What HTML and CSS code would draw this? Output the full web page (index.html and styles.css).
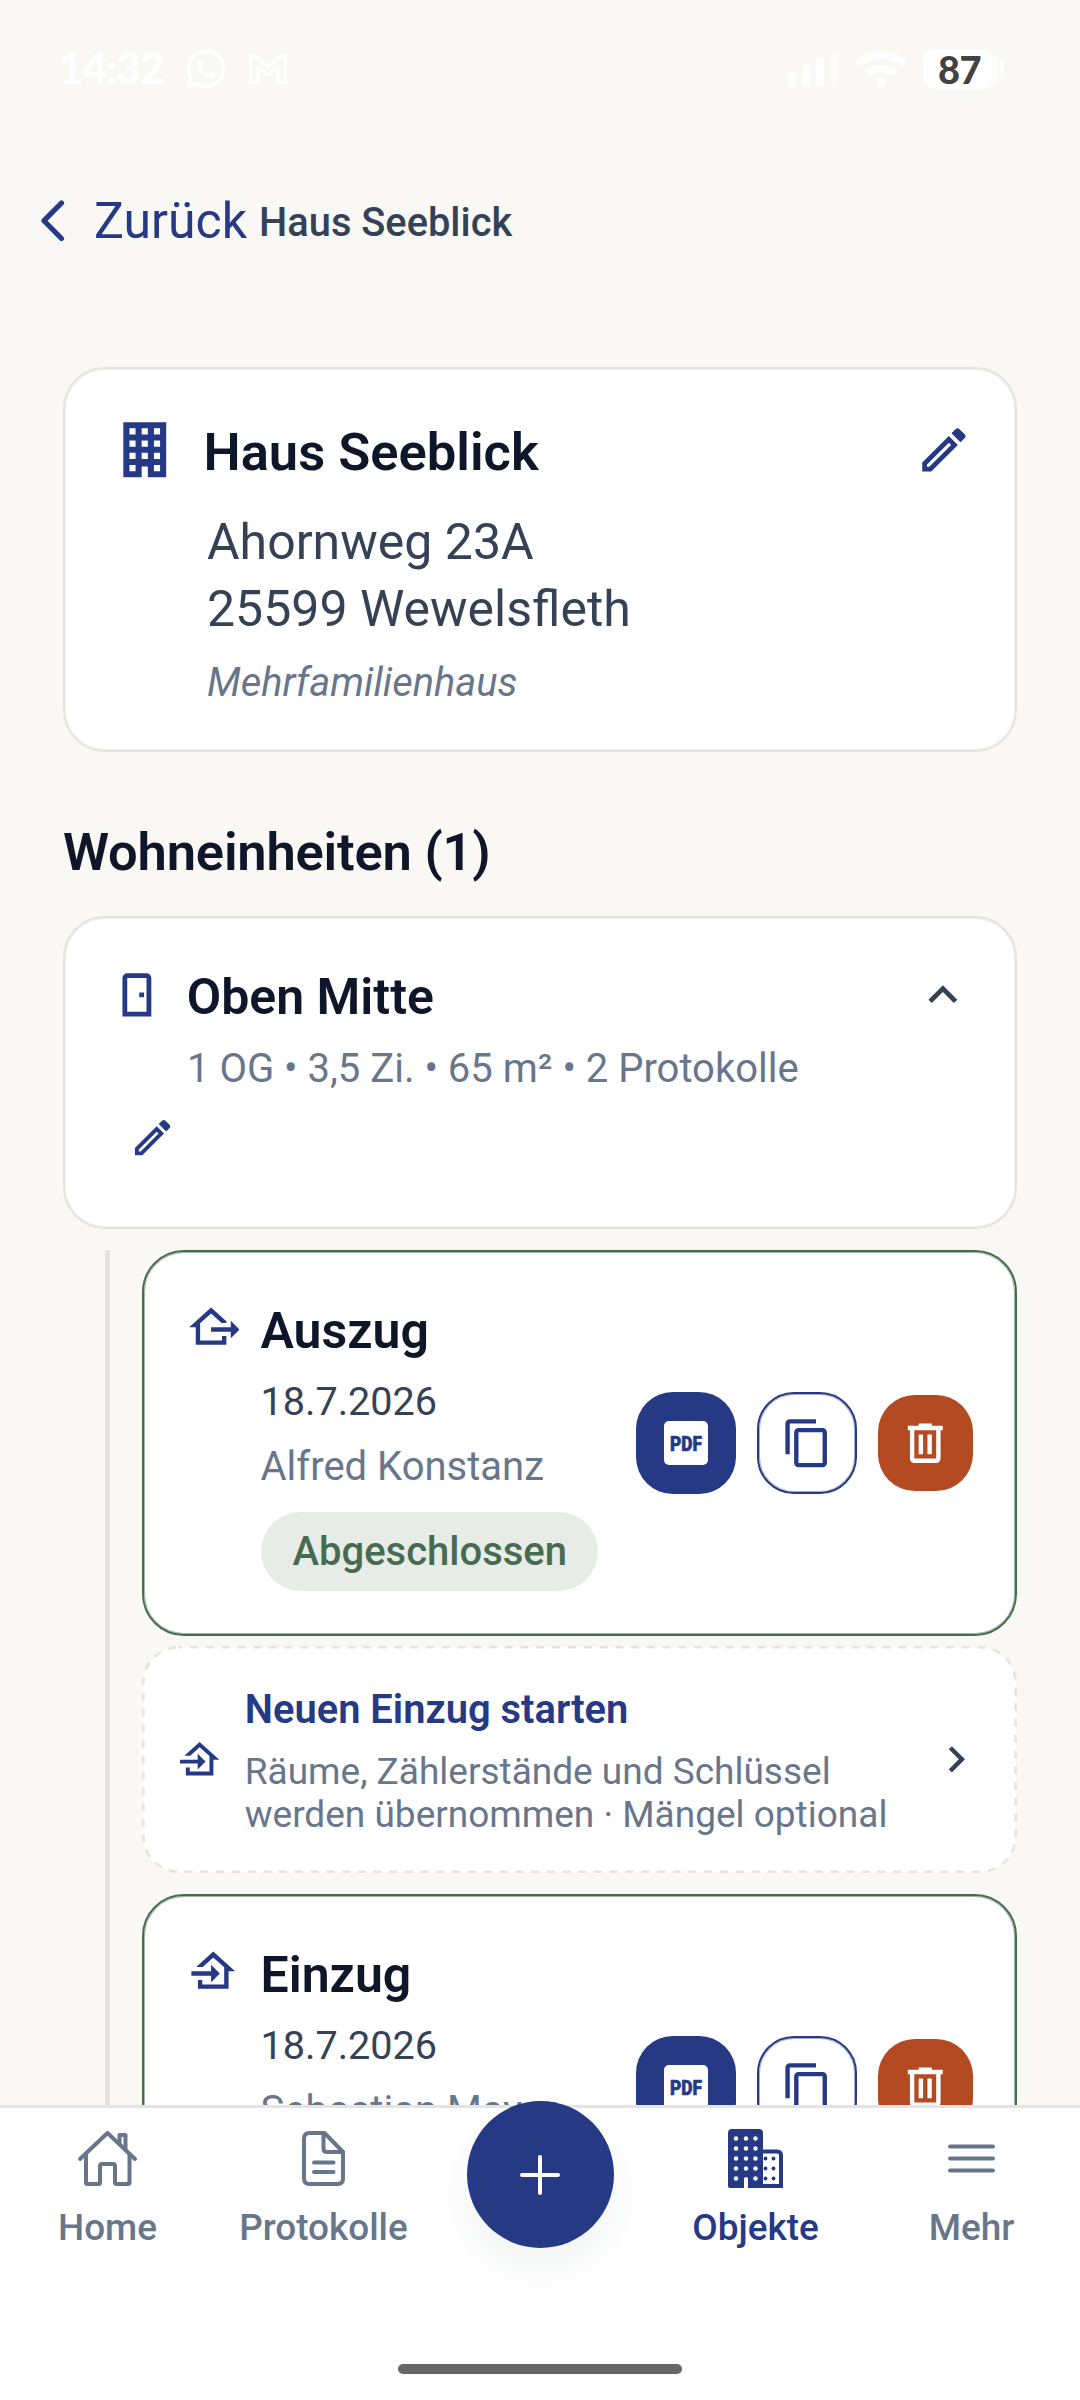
FILE: index.html
```html
<!DOCTYPE html>
<html lang="de">
<head>
<meta charset="utf-8">
<title>Haus Seeblick</title>
<link rel="stylesheet" href="styles.css">
</head>
<body>
<svg class="sprite" aria-hidden="true">
  <symbol id="i-building" viewBox="0 0 24 24"><path d="M5 3V21H11V17.5H13V21H19V3H5M7 5H9V7H7V5M11 5H13V7H11V5M15 5H17V7H15V5M7 9H9V11H7V9M11 9H13V11H11V9M15 9H17V11H15V9M7 13H9V15H7V13M11 13H13V15H11V13M15 13H17V15H15V13M7 17H9V19H7V17M15 17H17V19H15V17Z"/></symbol>
  <symbol id="i-pencil" viewBox="0 0 24 24"><path d="M14.06 9L15 9.94L5.92 19H5V18.08L14.06 9M17.66 3C17.41 3 17.15 3.1 16.96 3.29L15.13 5.12L18.88 8.87L20.71 7.04C21.1 6.65 21.1 6 20.71 5.63L18.37 3.29C18.17 3.09 17.92 3 17.66 3M14.06 6.19L3 17.25V21H6.75L17.81 9.94L14.06 6.19Z"/></symbol>
  <symbol id="i-door" viewBox="0 0 24 24"><path fill-rule="evenodd" d="M8 3H16A2 2 0 0 1 18 5V21H6V5A2 2 0 0 1 8 3M8 5V19H16V5H8M13 11H15V13H13V11Z"/></symbol>
  <symbol id="i-up" viewBox="0 0 24 24"><path d="M7.41 15.41L12 10.83L16.59 15.41L18 14L12 8L6 14Z"/></symbol>
  <symbol id="i-right" viewBox="0 0 24 24"><path d="M8.59 16.58L13.17 12L8.59 7.41L10 6L16 12L10 18Z"/></symbol>
  <symbol id="i-out" viewBox="0 0 24 24"><path d="M24 13L20 17V14H11V12H20V9L24 13M4 20V12H1L11 3L18 9.3V10H15.79L11 5.69L6 10.19V18H16V16H18V20H4Z"/></symbol>
  <symbol id="i-in" viewBox="0 0 24 24"><path d="M15 13L11 17V14H2V12H11V9L15 13M5 20V16H7V18H17V10.19L12 5.69L7.21 10H4.22L12 3L22 12H19V20H5Z"/></symbol>
  <symbol id="i-copy" viewBox="0 0 24 24"><path d="M19 21H8V7H19M19 5H8A2 2 0 0 0 6 7V21A2 2 0 0 0 8 23H19A2 2 0 0 0 21 21V7A2 2 0 0 0 19 5M16 1H4A2 2 0 0 0 2 3V17H4V3H16V1Z"/></symbol>
  <symbol id="i-trash" viewBox="0 0 24 24"><path d="M9 3V4H4V6H5V19A2 2 0 0 0 7 21H17A2 2 0 0 0 19 19V6H20V4H15V3H9M7 6H17V19H7V6M9 8V17H11V8H9M13 8V17H15V8H13Z"/></symbol>
</svg>

<div class="screen">
  <div class="status">
    <span class="clock">14:32</span>
    <svg class="whatsapp" width="40" height="40" viewBox="0 0 40 40"><path d="M2.500 37L5 28.500A17.500 17.500 0 1 1 11.500 35Z" fill="none" stroke="#fff" stroke-width="3.400" stroke-linejoin="round"/><path d="M14 11C11 11 10 14 11 17C13 23 17 27 23 29C27 30 30 28 30 25L25.500 22.500L22.500 25C19 23.500 17 21.500 15.500 18L17.500 15.500L15.500 11Z" fill="#fff"/></svg>
    <svg class="gmail" width="40" height="32" viewBox="0 0 40 32"><path d="M2.500 27V5Q2.500 1 6.500 3L20 14L33.500 3Q37.500 1 37.500 5V29.500H30V14L20 22L10 14V29.500H2.500Z" fill="none" stroke="#fff" stroke-width="3.400" stroke-linejoin="round"/></svg>
    <svg class="signal" width="50" height="36" viewBox="0 0 50 36"><g fill="#fff"><rect y="20.500" width="8" height="15.500" rx="4"/><rect x="14" y="13.500" width="8" height="22.500" rx="4"/><rect x="28" y="6" width="8" height="30" rx="4"/><rect x="42" width="8" height="36" rx="4" opacity=".5"/></g></svg>
    <svg class="wifi" width="50" height="36" viewBox="0 0 50 36"><g fill="none" stroke="#fff" stroke-width="7.500" stroke-linecap="round"><path d="M4 11Q25-3.500 46 11"/><path d="M13.500 20.500Q25 14.500 36.500 20.500"/></g><circle cx="25" cy="31.500" r="4.500" fill="#fff"/></svg>
    <span class="battery"><span class="battery-level">87</span></span><span class="battery-tip"></span>
  </div>

  <header class="header">
    <svg class="back" width="26" height="42" viewBox="0 0 26 42"><path d="M21.500 3L4 20.700L21.500 38.500" fill="none" stroke="currentColor" stroke-width="5.200" stroke-linecap="round" stroke-linejoin="round"/></svg>
    <span class="back-label">Zurück</span>
    <span class="header-title">Haus Seeblick</span>
  </header>

  <main class="content">
    <section class="card house">
      <div class="house-head">
        <svg class="i28 blue"><use href="#i-building"/></svg>
        <h1 class="house-name">Haus Seeblick</h1>
        <svg class="i22 blue"><use href="#i-pencil"/></svg>
      </div>
      <p class="address">Ahornweg 23A<br>25599 Wewelsfleth</p>
      <p class="kind">Mehrfamilienhaus</p>
    </section>

    <h2 class="section-title">Wohneinheiten (1)</h2>

    <section class="card unit">
      <div class="unit-head">
        <svg class="i22 blue"><use href="#i-door"/></svg>
        <h3 class="unit-name">Oben Mitte</h3>
        <svg class="i22 slate"><use href="#i-up"/></svg>
      </div>
      <p class="unit-meta">1 OG • 3,5 Zi. • 65 m² • 2 Protokolle</p>
      <svg class="i18 blue unit-edit"><use href="#i-pencil"/></svg>
    </section>

    <div class="timeline">
      <article class="card record">
        <svg class="i20 blue record-icon"><use href="#i-out"/></svg>
        <div class="record-body">
          <h3 class="record-title">Auszug</h3>
          <p class="record-date">18.7.2026</p>
          <p class="record-name">Alfred Konstanz</p>
          <span class="badge">Abgeschlossen</span>
        </div>
        <div class="actions">
          <span class="btn btn-pdf"><svg width="44" height="44" viewBox="0 0 44 44"><rect width="44" height="44" rx="5" fill="#fff"/><text class="pdf-text" x="6" y="29.500" textLength="32" lengthAdjust="spacingAndGlyphs">PDF</text></svg></span>
          <span class="btn btn-copy"><svg class="i20"><use href="#i-copy"/></svg></span>
          <span class="btn btn-delete"><svg class="i20"><use href="#i-trash"/></svg></span>
        </div>
      </article>

      <article class="start">
        <svg class="dashes" width="875" height="227" viewBox="0 0 875 227"><rect x="1.300" y="1.300" width="872.400" height="224.400" rx="35.400" fill="#fff" stroke="#e4e3dd" stroke-width="2.625" stroke-dasharray="7.875 7.875" stroke-dashoffset="4.450"/></svg>
        <svg class="i18 blue start-part"><use href="#i-in"/></svg>
        <div class="start-body start-part">
          <h4 class="start-title">Neuen Einzug starten</h4>
          <p class="start-text">Räume, Zählerstände und Schlüssel<br>werden übernommen · Mängel optional</p>
        </div>
        <svg class="i20 slate start-part"><use href="#i-right"/></svg>
      </article>

      <article class="card record">
        <svg class="i20 blue record-icon"><use href="#i-in"/></svg>
        <div class="record-body">
          <h3 class="record-title">Einzug</h3>
          <p class="record-date">18.7.2026</p>
          <p class="record-name">Sebastian Mayer</p>
        </div>
        <div class="actions">
          <span class="btn btn-pdf"><svg width="44" height="44" viewBox="0 0 44 44"><rect width="44" height="44" rx="5" fill="#fff"/><text class="pdf-text" x="6" y="29.500" textLength="32" lengthAdjust="spacingAndGlyphs">PDF</text></svg></span>
          <span class="btn btn-copy"><svg class="i20"><use href="#i-copy"/></svg></span>
          <span class="btn btn-delete"><svg class="i20"><use href="#i-trash"/></svg></span>
        </div>
      </article>
    </div>
  </main>

  <nav class="nav">
    <a class="tab">
      <svg class="tab-icon" viewBox="0 0 64 64"><g class="line"><path d="M4 32L31.500 6L59 32"/><path d="M10 27V55.500Q10 57 11.500 57H22.500Q24 57 24 55.500V39Q24 37 26 37H37Q39 37 39 39V55.500Q39 57 40.500 57H52Q53.500 57 53.500 55.500V27"/><path d="M43.500 17V8H49.500V23"/></g></svg>
      <span>Home</span>
    </a>
    <a class="tab">
      <svg class="tab-icon" viewBox="0 0 64 64"><g class="line"><path d="M32 6H17.500Q12 6 12 11.500V51.500Q12 57 17.500 57H45.500Q51 57 51 51.500V25L32.500 6"/><path d="M31.500 6V21.500Q31.500 25 35 25H51"/><path d="M22 35.500H41.500M22 45H41.500"/></g></svg>
      <span>Protokolle</span>
    </a>
    <div class="tab">
      <span class="fab"><svg width="40" height="40" viewBox="0 0 40 40"><path d="M20 2V38M2 20H38" stroke="#fff" stroke-width="4" stroke-linecap="round"/></svg></span>
    </div>
    <a class="tab active">
      <svg class="tab-icon" viewBox="0 0 64 64"><path fill="currentColor" d="M8 2H35Q39 2 39 6V61H24V52Q24 50 22 50Q20 50 20 52V61H6Q4 61 4 59V6Q4 2 8 2Z"/><path d="M38 24.500H53Q57 24.500 57 28.500V59H38" fill="none" stroke="currentColor" stroke-width="4"/><g fill="#fff"><circle cx="12" cy="11.500" r="2.200"/><circle cx="22" cy="11.500" r="2.200"/><circle cx="31.500" cy="11.500" r="2.200"/><circle cx="12" cy="21.500" r="2.200"/><circle cx="22" cy="21.500" r="2.200"/><circle cx="31.500" cy="21.500" r="2.200"/><circle cx="12" cy="31.500" r="2.200"/><circle cx="22" cy="31.500" r="2.200"/><circle cx="31.500" cy="31.500" r="2.200"/><circle cx="12" cy="41.500" r="2.200"/><circle cx="22" cy="41.500" r="2.200"/><circle cx="31.500" cy="41.500" r="2.200"/><circle cx="12" cy="51.500" r="2.200"/><circle cx="31.500" cy="51.500" r="2.200"/></g><g fill="currentColor"><circle cx="41.500" cy="31.500" r="1.900"/><circle cx="49.500" cy="31.500" r="1.900"/><circle cx="41.500" cy="41.500" r="1.900"/><circle cx="49.500" cy="41.500" r="1.900"/><circle cx="41.500" cy="51.500" r="1.900"/><circle cx="49.500" cy="51.500" r="1.900"/></g></svg>
      <span>Objekte</span>
    </a>
    <a class="tab">
      <svg class="tab-icon" viewBox="0 0 64 64"><path class="line" d="M10 19.500H53M10 31.500H53M10 43.500H53"/></svg>
      <span>Mehr</span>
    </a>
    <span class="home-bar"></span>
  </nav>
</div>
</body>
</html>
```
FILE: styles.css
```css
* { box-sizing: border-box; margin: 0; padding: 0; }

body {
  width: 1080px;
  height: 2400px;
  overflow: hidden;
  background: #f9f8f4;
  font-family: Roboto, "Liberation Sans", sans-serif;
  color: #101629;
}

svg { display: block; flex: none; }
.sprite { position: absolute; width: 0; height: 0; }

.i28 { width: 73.5px; height: 73.5px; }
.i22 { width: 57.75px; height: 57.75px; }
.i20 { width: 52.5px; height: 52.5px; }
.i18 { width: 47.25px; height: 47.25px; }
.blue { fill: #253985; }
.slate { fill: #354256; }

.screen { display: flex; flex-direction: column; height: 2400px; }

/* Status bar */
.status {
  display: flex;
  align-items: center;
  flex: none;
  height: 105px;
  padding: 32px 76px 0 58px;
  color: #fff;
  font-family: Lato, sans-serif;
}
.clock { width: 128px; margin-top: -2px; font-size: 43px; font-weight: 900; line-height: 54px; letter-spacing: -1px; }
.gmail { margin-left: 22px; }
.signal { margin-left: auto; }
.wifi { margin-left: 18px; }
.battery {
  display: flex;
  width: 74px;
  height: 40px;
  margin-left: 17px;
  border-radius: 12px;
  background: #fdfdfb;
}
.battery-level {
  width: 65px;
  border-radius: 12px 0 0 12px;
  background: #fff;
  color: #424242;
  font-size: 38px;
  font-weight: 900;
  line-height: 40px;
  padding-left: 15px;
  letter-spacing: -0.5px;
}
.battery-tip { width: 4px; height: 19px; margin-left: 3px; border-radius: 0 4px 4px 0; background: #fdfdfb; }

/* Header */
.header { display: flex; align-items: center; flex: none; height: 232px; padding-left: 40px; }
.back { color: #253985; }
.back-label { margin-left: 28px; font-size: 50px; line-height: 60px; color: #253985; }
.header-title { margin: 3px 0 0 12px; font-size: 39.8px; line-height: 48px; font-weight: 500; color: #354256; }

/* Content */
.content { flex: 1; min-height: 0; overflow: hidden; padding: 30px 63px 0; }

.card {
  background: #fff;
  border: 2px solid #e4e3dd;
  border-radius: 42px;
  box-shadow: inset 0 0 0 1px #f1f0ed;
}

.house { height: 385px; padding: 42px 42px 0; }
.house-head { display: flex; align-items: center; height: 78px; }
.house-head .i28 { margin-left: 1px; }
.house-name { flex: 1; margin-left: 22px; padding-top: 3px; font-size: 52.5px; line-height: 62px; font-weight: 600; }
.address { margin: 20px 0 0 100px; font-size: 50px; line-height: 67px; color: #354256; }
.kind { margin: 15px 0 0 100px; font-size: 39.8px; line-height: 50px; font-style: italic; color: #68768c; }

.section-title { margin: 70px 0 34px; font-size: 52.5px; line-height: 60px; font-weight: 600; letter-spacing: -0.2px; }

.unit { height: 313px; padding: 42px 43px 0 43px; }
.unit-head { display: flex; align-items: center; height: 70px; }
.unit-name { flex: 1; margin-left: 21px; padding-top: 4px; font-size: 50px; line-height: 60px; font-weight: 600; }
.unit-meta { margin: 14px 0 0 79px; font-size: 40px; line-height: 50px; color: #68768c; }
.unit-edit { margin: 20px 0 0 21px; }

.timeline { margin: 21px 0 0 42px; padding-left: 32px; border-left: 5px solid #e4e3df; }

.record {
  display: flex;
  align-items: flex-start;
  height: 386px;
  padding: 0 42px 0 43px;
  border-color: #476b50;
  box-shadow: inset 0 0 0 1px #a3b5a7;
}
.record-icon { margin-top: 49px; }
.record-body { flex: 1; margin-left: 21px; padding-top: 49px; }
.record-title { font-size: 50px; line-height: 60px; font-weight: 600; }
.record-date { margin-top: 16px; font-size: 39.6px; line-height: 50px; color: #354256; }
.record-name { margin-top: 15px; font-size: 40px; line-height: 50px; color: #68768c; }
.badge {
  display: inline-block;
  margin-top: 20px;
  padding: 0 31px 0 32px;
  border-radius: 42px;
  background: #e8ece7;
  color: #476b50;
  font-size: 40px;
  line-height: 79px;
  font-weight: 500;
}

.actions { display: flex; align-items: center; align-self: center; gap: 21px; }
.btn {
  display: flex;
  align-items: center;
  justify-content: center;
  width: 100px;
  height: 102px;
  border-radius: 37px;
}
.btn-pdf { background: #253985; }
.btn-copy { border: 2px solid #253985; box-shadow: inset 0 0 0 1px #a3acd0; fill: #253985; }
.btn-delete { width: 95px; height: 96px; background: #b44a21; fill: #fff; }
.pdf-text { font-size: 20.5px; font-weight: 900; fill: #253985; stroke: #253985; stroke-width: 0.6; }

.start {
  position: relative;
  display: flex;
  align-items: center;
  height: 227px;
  margin: 10px 0 21px;
  padding: 0 35px 0 34px;
}
.dashes { position: absolute; left: 0; top: 0; }
.start-part { position: relative; }
.start-body { flex: 1; margin-left: 21.5px; padding-top: 4px; }
.start-title { font-size: 39.9px; line-height: 46px; font-weight: 600; color: #253985; }
.start-text { margin-top: 17px; font-size: 37px; line-height: 43px; color: #68768c; }

/* Bottom navigation */
.nav {
  position: relative;
  display: flex;
  flex: none;
  height: 295px;
  border-top: 3px solid #e5e4df;
  background: #fff;
}
.tab {
  display: flex;
  flex-direction: column;
  align-items: center;
  width: 216px;
  padding-top: 19px;
  color: #68768c;
  font-size: 36.9px;
  line-height: 44px;
  font-weight: 500;
}
.tab span { margin: 15px 1px 0 0; }
.tab-icon { width: 64px; height: 64px; }
.active { color: #253985; }
.line { fill: none; stroke: currentColor; stroke-width: 4; stroke-linecap: round; stroke-linejoin: round; }
.tab .fab {
  display: flex;
  align-items: center;
  justify-content: center;
  width: 147px;
  height: 147px;
  margin: -26px 0 0;
  border-radius: 50%;
  background: #253985;
  box-shadow: 0 21px 42px rgba(20, 60, 50, 0.06);
}
.nav .home-bar {
  position: absolute;
  left: 398px;
  bottom: 26px;
  width: 284px;
  height: 10px;
  border-radius: 5px;
  background: #666;
}
```
